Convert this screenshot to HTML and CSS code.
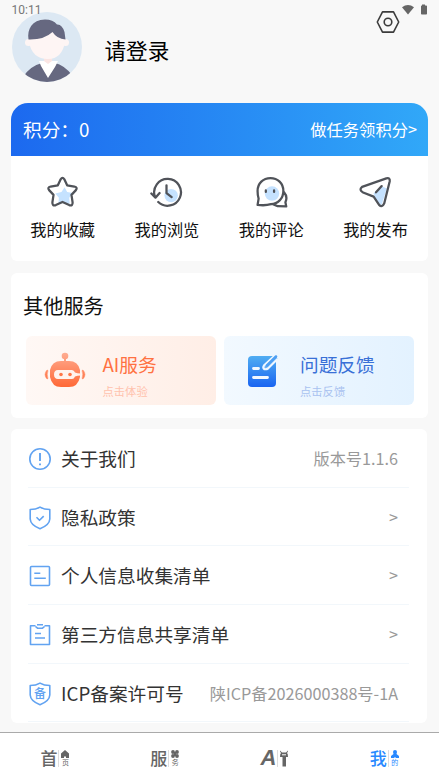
FILE: index.html
```html
<!DOCTYPE html>
<html lang="zh-CN">
<head>
<meta charset="utf-8">
<meta name="viewport" content="width=device-width, initial-scale=1">
<title>我的</title>
<link rel="stylesheet" href="styles.css">
</head>
<body>
<div class="app">
  <div class="status">
    <span class="time">10:11</span>
    <svg class="status-icons" width="26" height="12" viewBox="0 0 26 12" fill="#666"><path d="M0 3.200Q6-1.400 12 3.200L6 10.500Z"/><path d="M20 .5h3v1h1.200q.8 0 .8.800v7.400q0 .8-.8.800h-4.400q-.8 0-.8-.8V2.300q0-.8.800-.8H20Z"/></svg>
  </div>
  <header class="profile">
    <svg class="avatar" viewBox="0 0 70 70">
      <defs><clipPath id="round"><circle cx="35" cy="35" r="35"/></clipPath></defs>
      <g clip-path="url(#round)">
        <path fill="#dce8f3" d="M0 0h70v70H0z"/>
        <path fill="#666880" d="M11 65Q18 54 30 51L36 58 43 51Q52 53 60 63V70H11Z"/>
        <path fill="#fae5e3" d="M32 44h8v8h-8z"/>
        <path fill="#fff" d="M27 49l5 0 4 3 4-3 6 0-3 6-7 11L29 54Z"/>
        <circle cx="16.500" cy="30.500" r="3.500" fill="#fef5f4"/><circle cx="53.500" cy="30.500" r="3.500" fill="#fef5f4"/>
        <path fill="#fef5f4" d="M17 24L40 17 53 26V30Q50 47 36 47 20 47 17 30Z"/>
        <path fill="#666880" d="M16.500 27.500C15 17 20 8 33 7.500Q41 7.500 45 12.500 50 12 52.500 20L53.500 27.500Q45 27 40.500 20 32 28 16.500 27.500Z"/>
      </g>
    </svg>
    <h1 class="login">请登录</h1>
    <svg class="settings" width="24" height="24" viewBox="0 0 24 24" fill="none" stroke="#3c3c3c" stroke-width="1.600"><path d="M6.500 1.900h11L22.700 12l-5.200 10.100h-11L1.300 12Z" stroke-linejoin="round"/><circle cx="12" cy="12" r="3.800"/></svg>
  </header>

  <section class="card points">
    <div class="banner"><span class="score">积分：0</span><span class="task">做任务领积分&gt;</span></div>
    <nav class="shortcuts">
      <a class="shortcut"><svg viewBox="0 0 32 32"><path fill="#c5e2ff" d="M18 11l2.500 4.500 5.500 1-3.500 4.500.5 6-5-1-6 1 .5-6-3.500-4 6-1.500Z"/><path class="line" d="M14.200 3.200Q16 .5 17.800 3.200L20.500 9 27.500 10.200Q31 11 29 13.700L24.700 18.300 25.800 25.500Q26 29.500 22.500 28.200L16 25.200 9.500 28.200Q6 29.500 6.200 25.500L7.300 18.300 3 13.700Q1 11 4.500 10.200L11.500 9Z"/></svg>我的收藏</a>
      <a class="shortcut"><svg viewBox="0 0 32 32"><circle cx="20.500" cy="19" r="6.500" fill="#c5e2ff"/><path class="line" d="M4.700 20A13 13 0 1 1 8 25.200M1.300 17l4 4 4-4.500M16 9v7.500l5 4"/></svg>我的浏览</a>
      <a class="shortcut"><svg viewBox="0 0 32 32"><circle cx="16.500" cy="17" r="7" fill="#c5e2ff"/><path class="line" d="M2.500 28L3.500 22Q2.500 19 2.500 14.500C2.500 7 8 2 15 2S27.500 7 27.500 14.500 22 27 15.500 27.300Q10 29 2.500 28ZM28 15.500Q32 20 29.500 25.500L30.300 29.500 22 29.300 18 27.500"/><path class="line" d="M10.500 14v1.500M18.500 14v1.500"/></svg>我的评论</a>
      <a class="shortcut"><svg viewBox="0 0 32 32"><path fill="#c5e2ff" d="M14 17l8-7 5 2-5 16-4-2Z"/><path class="line" d="M26.500 2.300Q30.300 1.300 29.800 5L24.500 26.500Q22.500 31 19.500 28L14.200 20 4 16Q-.5 13.500 3 10.500ZM16.500 15.800l5.500-6"/></svg>我的发布</a>
    </nav>
  </section>

  <section class="card services">
    <h2>其他服务</h2>
    <div class="tiles">
      <a class="tile ai">
        <svg class="robot" viewBox="0 0 42 36"><defs><linearGradient id="orange" x1="0" y1="0" x2="0" y2="36" gradientUnits="userSpaceOnUse"><stop stop-color="#ffae93"/><stop offset="1" stop-color="#ff6634"/></linearGradient></defs><g fill="url(#orange)"><circle cx="21" cy="4" r="3.300"/><path d="M20 6h2v5h-2zM17 9h8q9 0 11 9v7q-2 10-11 10h-8q-9 0-11-10v-7q2-9 11-9Z"/><path d="M3 18Q-1 22.500 3 27L4 26.500Q2.500 22.500 4 18.500ZM39 18Q43 22.500 39 27L38 26.500Q39.500 22.500 38 18.500Z" stroke="#ff8b62" stroke-width=".5"/></g><path fill="#fff2ed" d="M14 18h14q2 0 3 2.500 2 1 6 1v2q-4 0-6 1-1 2.500-3 2.500H14q-4-.2-4-4.500t4-4.500Z"/><circle cx="17" cy="22.500" r="1.800" fill="#ff7546"/><circle cx="26" cy="22.500" r="1.800" fill="#ff7546"/></svg>
        <span class="tile-text"><strong>AI服务</strong><small>点击体验</small></span>
      </a>
      <a class="tile feedback">
        <svg class="note" viewBox="0 0 30 32"><defs><linearGradient id="blue" x1="0" y1="0" x2="0" y2="1"><stop stop-color="#50adf2"/><stop offset="1" stop-color="#1964f1"/></linearGradient></defs><rect y="1" width="28" height="31" rx="4" fill="url(#blue)"/><path d="M5.500 13.500h5M5.500 22.500h14" stroke="#f1f8ff" stroke-width="2.800" stroke-linecap="round"/><path d="M27.500 0L16 10.500Q14.500 13 16.500 14.200 18.500 14.500 20 13.500L29.500 4" fill="#6ab0f7" stroke="#eff7ff" stroke-width="2.200"/><path d="M28 1.500L19 10.500" stroke="#4d9ff3" stroke-width="2.500" stroke-linecap="round"/></svg>
        <span class="tile-text"><strong>问题反馈</strong><small>点击反馈</small></span>
      </a>
    </div>
  </section>

  <section class="card list">
    <a class="row"><svg viewBox="0 0 24 24"><circle cx="12" cy="12" r="10.200"/><path d="M12 6v8M12 16.500v1.700" stroke-width="1.900"/></svg><span>关于我们</span><em>版本号1.1.6</em></a>
    <a class="row"><svg viewBox="0 0 24 24"><path d="M12 1.100Q16 3.500 21.800 3.500V13Q21.500 19 12 22.700 2.500 19 2.200 13V3.500Q8 3.500 12 1.100ZM8.500 11.300l3 3 4.200-4.200"/></svg><span>隐私政策</span><em>&gt;</em></a>
    <a class="row"><svg viewBox="0 0 24 24"><rect x="2.500" y="2.500" width="19" height="19" rx="1"/><path d="M6.300 9.300h6M6.300 14.300h11.500"/></svg><span>个人信息收集清单</span><em>&gt;</em></a>
    <a class="row"><svg viewBox="0 0 24 24"><path d="M7.500 2.700h-5v18.800h19V2.700h-5M9 1.800h6M7.500 3.500l2 1.700h5l2-1.700M7 10.500h6M7 15h10"/></svg><span>第三方信息共享清单</span><em>&gt;</em></a>
    <a class="row"><svg viewBox="0 0 24 24"><path d="M12 1.100Q16 3.500 21.800 3.500V13Q21.500 19 12 22.700 2.500 19 2.200 13V3.500Q8 3.500 12 1.100Z"/><text x="12" y="16.300" text-anchor="middle">备</text></svg><span>ICP备案许可号</span><em>陕ICP备2026000388号-1A</em></a>
  </section>

  <nav class="tabs">
    <a class="tab"><b>首</b><i class="sub"><svg viewBox="0 0 8 8"><path d="M4 0l4 3.500V8H5V6.500H3V8H0V3.500Z"/></svg>页</i></a>
    <a class="tab"><b>服</b><i class="sub"><svg viewBox="0 0 8 8"><circle cx="2" cy="2" r="1.900"/><circle cx="6" cy="2" r="1.900"/><circle cx="2" cy="6" r="1.900"/><circle cx="6" cy="6" r="1.900"/><path d="M3 2h2v4H3Z"/></svg>务</i></a>
    <a class="tab"><b class="latin">A</b><i class="sub"><svg class="bot" viewBox="0 0 8 16"><path d="M0 0l2 2h4l2-2v1L7 2.500Q8 3 8 6.500H6V16H2.500V6.500H0Q0 3 1 2.500L0 1Z"/><path d="M2 4.300h4" stroke="#fff"/></svg></i></a>
    <a class="tab active"><b>我</b><i class="sub"><svg viewBox="0 0 8 8"><path d="M4 0q2 0 2 2L5.500 4 8 6v2H5L4 7 3 8H0V6l2.500-2L2 2Q2 0 4 0Z"/></svg>的</i></a>
  </nav>
</div>
</body>
</html>
```

FILE: styles.css
```css
* { box-sizing: border-box; }
body { margin: 0; background: #f8f8f8; color: #111; font-family: "Noto Sans CJK SC", "Noto Sans", sans-serif; }
h1, h2 { margin: 0; font-weight: 400; }
svg { display: block; flex: none; }
.app { position: relative; display: flex; flex-direction: column; height: 782px; overflow: hidden; }
.status { position: absolute; z-index: 2; top: 3px; left: 11.5px; right: 11px; display: flex; justify-content: space-between; }
.time { font: 12px/14px Roboto, sans-serif; color: #777; }
.status-icons { margin-top: .5px; }
.profile { display: flex; align-items: flex-start; height: 103px; padding: 11px 39px 0 11px; }
.avatar { width: 70px; height: 70px; margin: .5px 0 0 .5px; }
.login { margin: 22.500px auto 0 23px; font-size: 21.600px; line-height: 32px; color: #000; }
.settings { margin: -1px 0 0; }
.card { margin: 0 11px 12px; border-radius: 6px; background: #fff; }
.points { height: 158px; border-radius: 17px 17px 6px 6px; overflow: hidden; }
.banner { display: flex; align-items: center; justify-content: space-between; height: 53px; padding: 0 11px 1px 12px; color: #fff; background: linear-gradient(90deg, #1c69ef, #31a8f8); }
.score { font-size: 18.700px; line-height: 28px; }
.task { font-size: 16.300px; line-height: 24px; }
.shortcuts { display: grid; grid-template-columns: repeat(4, 104.300px); padding-top: 20px; }
.shortcut { display: flex; flex-direction: column; align-items: center; font-size: 16.200px; line-height: 24px; gap: 8px; padding-right: 1px; }
.shortcut svg { width: 33px; height: 33px; }
.line { fill: none; stroke: #505359; stroke-width: 2.2; stroke-linecap: round; stroke-linejoin: round; }
.services { height: 145px; margin-bottom: 11px; padding: 17px 14px 0 15px; }
.services h2 { margin-left: -3px; font-size: 20.200px; line-height: 32px; }
.tiles { display: grid; grid-template-columns: 190px 190px; gap: 8px; margin-top: 14px; }
.tile { display: flex; align-items: flex-start; height: 69px; border-radius: 6px; }
.ai { padding: 16px 0 0 18px; background: linear-gradient(90deg, #fff8f5, #ffeee6); }
.feedback { padding: 19px 0 0 24px; background: linear-gradient(90deg, #f2f9ff, #e3f2ff); }
.robot { width: 42px; height: 36px; }
.note { width: 30px; height: 32px; }
.tile-text { display: flex; flex-direction: column; margin: -2px 0 0 16.500px; }
.feedback .tile-text { margin: -5px 0 0 22px; }
.tile strong { font-size: 18.700px; font-weight: 400; line-height: 28px; }
.tile small { margin-top: 5px; font-size: 11.300px; line-height: 16px; }
.ai strong { color: #ff7142; }
.ai small { color: #ffc2ad; }
.feedback strong { color: #3970d7; }
.feedback small { color: #a9c2f0; }
.list { height: 294px; margin: 0 12px 9px 11px; padding: 0 18px 0 17px; }
.row { display: flex; align-items: center; height: 58.700px; padding-right: 11px; border-bottom: 1px solid #f2f7fb; font-size: 18.700px; line-height: 28px; color: #333; }
.row > svg { width: 24px; height: 24px; margin: 2px 9px 0 0; fill: none; stroke: #62a3f1; stroke-width: 1.6; stroke-linejoin: round; }
.row text { font-size: 12px; font-weight: 500; fill: #62a3f1; stroke: none; }
.row em { margin-left: auto; font-size: 16.200px; font-style: normal; line-height: 24px; color: #999; }
.tabs { display: grid; grid-template-columns: repeat(4, 1fr); height: 50px; border-top: 1px solid #aaa; background: #fff; color: #666; }
.tab { display: flex; align-items: center; justify-content: center; height: 50px; }
.tab b { font-size: 17px; font-weight: 500; line-height: 20px; }
.tab .latin { font: italic bold 22px/20px "Liberation Sans", sans-serif; }
.sub { display: flex; flex-direction: column; align-items: center; width: 11px; height: 17px; margin-left: 1px; padding-left: 2px; border-left: 1px solid #ddd; font-size: 7px; font-style: normal; line-height: 9px; }
.sub svg { width: 8px; height: 8px; fill: currentColor; }
.sub .bot { height: 17px; }
.active { color: #2989ff; }
```
